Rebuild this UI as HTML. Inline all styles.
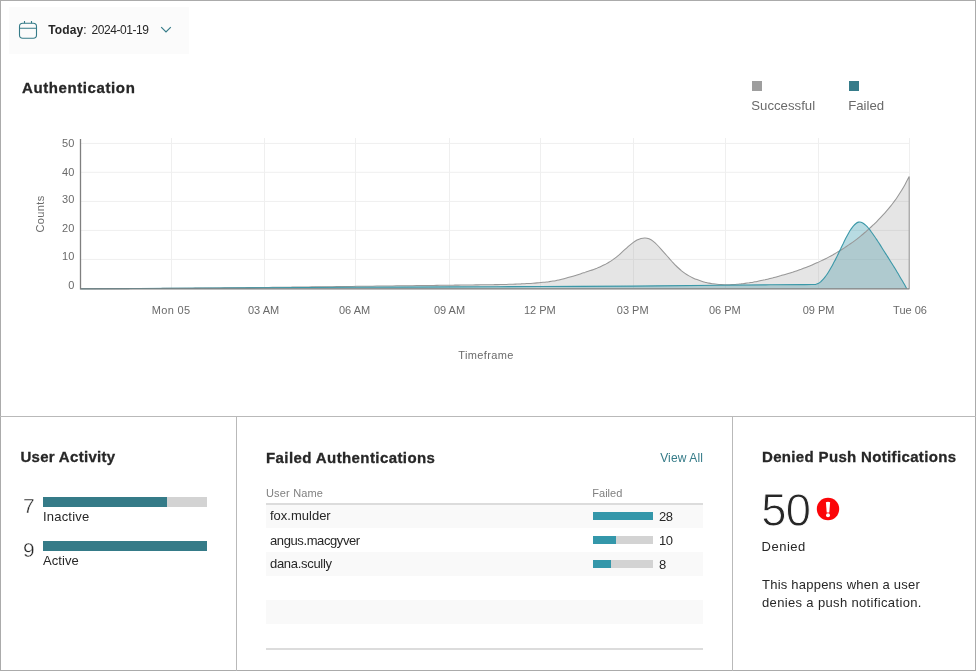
<!DOCTYPE html>
<html lang="en">
<head>
<meta charset="utf-8">
<title>Authentication Dashboard</title>
<style>
html,body{margin:0;padding:0;background:#fff;}
body{width:976px;height:671px;position:relative;overflow:hidden;font-family:"Liberation Sans",Arial,sans-serif;}
.t{position:absolute;line-height:1;white-space:pre;}
.b{position:absolute;}
svg{position:absolute;left:0;top:0;}
#root{position:absolute;left:0;top:0;width:976px;height:671px;will-change:transform;}
</style>
</head>
<body>
<div id="root">
<div class="b" style="left:0px;top:0px;width:976px;height:1px;background:#ababab;"></div>
<div class="b" style="left:0px;top:0px;width:1px;height:671px;background:#ababab;"></div>
<div class="b" style="left:975px;top:0px;width:1px;height:671px;background:#ababab;"></div>
<div class="b" style="left:0px;top:670px;width:976px;height:1px;background:#ababab;"></div>
<div class="b" style="left:0px;top:416px;width:976px;height:1px;background:#b9b9b9;"></div>
<div class="b" style="left:236px;top:416px;width:1px;height:255px;background:#b9b9b9;"></div>
<div class="b" style="left:732px;top:416px;width:1px;height:255px;background:#b9b9b9;"></div>
<div class="b" style="left:9px;top:7px;width:180px;height:47px;background:#fbfbfb;"></div>
<svg width="200" height="60" viewBox="0 0 200 60" fill="none" stroke="#357b88" stroke-width="1.1">
<rect x="19.5" y="23.3" width="17" height="15" rx="3.2" ry="3.2"/>
<path d="M19.5 28.3H36.5M24.5 21V23.3M31.5 21V23.3"/>
<path d="M161.2 27.2L166 32L170.8 27.2" stroke-width="1.2"/>
</svg>
<div class="t" style="left:48.20px;top:23.94px;font-size:12px;color:#272727;letter-spacing:0.12px;"><b>Today</b>:</div>
<div class="t" style="left:91.60px;top:23.94px;font-size:12px;color:#272727;letter-spacing:-0.45px;">2024-01-19</div>
<div class="t" style="left:22.00px;top:80.30px;font-size:15px;color:#272727;font-weight:700;-webkit-text-stroke:0.3px #272727;letter-spacing:0.6px;">Authentication</div>
<div class="b" style="left:752px;top:81px;width:10px;height:10px;background:#9e9e9e;"></div>
<div class="b" style="left:849px;top:81px;width:10px;height:10px;background:#367c8a;"></div>
<div class="t" style="left:751.30px;top:98.83px;font-size:13.2px;color:#6a6a6a;">Successful</div>
<div class="t" style="left:848.20px;top:98.83px;font-size:13.2px;color:#6a6a6a;">Failed</div>
<svg width="976" height="400" viewBox="0 0 976 400" font-family="Liberation Sans, Arial, sans-serif" font-size="11" fill="#6a6a6a">
<g stroke="#efefef" stroke-width="1" fill="none">
<path d="M171.5 138V288"/><path d="M264.5 138V288"/><path d="M355.5 138V288"/><path d="M449.5 138V288"/><path d="M540.5 138V288"/><path d="M633.5 138V288"/><path d="M725.5 138V288"/><path d="M818.5 138V288"/><path d="M909.5 138V288"/><path d="M81 143.4H909.5"/><path d="M81 172.3H909.5"/><path d="M81 201.4H909.5"/><path d="M81 230.4H909.5"/><path d="M81 259.4H909.5"/>
</g>
<g transform="translate(0 0.3)">
<path d="M80.5 288.5C95.7 288.4 140.9 288.2 171.5 288.0C202.1 287.8 233.4 287.7 264 287.5C294.6 287.3 324.2 287.1 355 287.0C385.8 286.9 418.2 286.7 449 286.6C479.8 286.5 509.3 286.3 540 286.2C570.7 286.1 603.0 286.0 633 285.8C663.0 285.6 697.2 285.2 720 285.0C742.8 284.8 755.8 284.6 770 284.5C784.2 284.4 797.8 284.4 805 284.3C812.2 284.2 811.2 284.2 813.0 284.17C814.8 284.1 814.6 284.3 815.5 284.16C816.4 284.0 817.2 283.7 818.1 283.25C819.0 282.8 819.8 282.2 820.6 281.52C821.4 280.8 822.3 280.0 823.1 279.05C823.9 278.1 824.8 277.1 825.6 275.93C826.5 274.8 827.4 273.5 828.2 272.23C829.1 270.9 829.9 269.5 830.7 268.05C831.5 266.6 832.4 265.1 833.2 263.47C834.1 261.9 834.9 260.2 835.8 258.57C836.6 256.9 837.5 255.2 838.3 253.42C839.1 251.7 839.9 249.9 840.8 248.14C841.6 246.4 842.5 244.6 843.4 242.88C844.2 241.2 845.1 239.4 845.9 237.82C846.7 236.2 847.6 234.6 848.4 233.14C849.2 231.7 850.0 230.3 850.9 229.01C851.8 227.8 852.6 226.6 853.5 225.62C854.4 224.6 855.2 223.8 856.0 223.16C856.8 222.5 857.6 222.1 858.5 221.84C859.4 221.6 860.2 221.6 861.1 221.86C862.0 222.1 862.8 222.6 863.6 223.13C864.4 223.7 865.2 224.5 866.1 225.34C867.0 226.2 867.9 227.2 868.7 228.19C869.6 229.2 870.4 230.3 871.2 231.41C872.0 232.5 872.9 233.7 873.7 234.9C874.5 236.1 875.4 237.3 876.2 238.61C877.1 239.9 877.9 241.2 878.8 242.48C879.6 243.8 880.5 245.1 881.3 246.44C882.1 247.8 882.9 249.1 883.8 250.45C884.6 251.8 885.5 253.1 886.4 254.46C887.2 255.8 888.1 257.1 888.9 258.47C889.7 259.8 890.5 261.1 891.4 262.5C892.2 263.9 893.1 265.2 894.0 266.57C894.9 267.9 895.7 269.3 896.5 270.69C897.3 272.1 898.2 273.5 899.0 274.88C899.8 276.3 900.6 277.7 901.5 279.15C902.4 280.6 903.2 282.0 904.1 283.53C905.0 285.1 906.2 287.5 906.6 288.3L906.6 288.5L80.5 288.5Z" fill="#3a9cb0" fill-opacity="0.36" stroke="none"/>
<path d="M80.5 288.5C81.2 288.5 83.2 288.5 84.5 288.48C85.8 288.5 87.2 288.5 88.5 288.47C89.8 288.5 91.2 288.5 92.5 288.46C93.8 288.5 95.2 288.5 96.5 288.45C97.8 288.4 99.2 288.4 100.5 288.43C101.8 288.4 103.2 288.4 104.5 288.42C105.8 288.4 107.2 288.4 108.5 288.4C109.8 288.4 111.2 288.4 112.5 288.38C113.8 288.4 115.2 288.4 116.5 288.37C117.8 288.4 119.2 288.4 120.5 288.35C121.8 288.3 123.2 288.3 124.5 288.33C125.8 288.3 127.2 288.3 128.5 288.31C129.8 288.3 131.2 288.3 132.5 288.28C133.8 288.3 135.2 288.3 136.5 288.26C137.8 288.3 139.2 288.2 140.6 288.24C141.9 288.2 143.3 288.2 144.6 288.21C145.9 288.2 147.3 288.2 148.6 288.19C149.9 288.2 151.3 288.2 152.6 288.16C153.9 288.2 155.3 288.1 156.6 288.13C157.9 288.1 159.3 288.1 160.6 288.11C161.9 288.1 163.3 288.1 164.6 288.08C165.9 288.1 167.3 288.1 168.6 288.05C169.9 288.0 171.3 288.0 172.6 288.02C173.9 288.0 175.3 288.0 176.6 287.99C177.9 288.0 179.3 288.0 180.6 287.96C181.9 287.9 183.3 287.9 184.6 287.92C185.9 287.9 187.3 287.9 188.6 287.89C189.9 287.9 191.3 287.9 192.6 287.86C193.9 287.8 195.3 287.8 196.6 287.82C197.9 287.8 199.3 287.8 200.6 287.79C201.9 287.8 203.3 287.8 204.6 287.75C205.9 287.7 207.3 287.7 208.6 287.71C209.9 287.7 211.3 287.7 212.6 287.68C213.9 287.7 215.3 287.7 216.6 287.64C217.9 287.6 219.3 287.6 220.6 287.6C221.9 287.6 223.3 287.6 224.6 287.56C225.9 287.5 227.3 287.5 228.6 287.52C229.9 287.5 231.3 287.5 232.6 287.48C233.9 287.5 235.3 287.5 236.6 287.44C237.9 287.4 239.3 287.4 240.6 287.4C241.9 287.4 243.3 287.4 244.6 287.36C245.9 287.3 247.3 287.3 248.6 287.32C249.9 287.3 251.3 287.3 252.6 287.27C253.9 287.3 255.3 287.2 256.6 287.23C258.0 287.2 259.4 287.2 260.7 287.19C262.0 287.2 263.4 287.2 264.7 287.14C266.0 287.1 267.4 287.1 268.7 287.1C270.0 287.1 271.4 287.1 272.7 287.05C274.0 287.0 275.4 287.0 276.7 287.01C278.0 287.0 279.4 287.0 280.7 286.96C282.0 286.9 283.4 286.9 284.7 286.92C286.0 286.9 287.4 286.9 288.7 286.87C290.0 286.9 291.4 286.8 292.7 286.83C294.0 286.8 295.4 286.8 296.7 286.78C298.0 286.8 299.4 286.7 300.7 286.73C302.0 286.7 303.4 286.7 304.7 286.68C306.0 286.7 307.4 286.7 308.7 286.64C310.0 286.6 311.4 286.6 312.7 286.59C314.0 286.6 315.4 286.6 316.7 286.54C318.0 286.5 319.4 286.5 320.7 286.49C322.0 286.5 323.4 286.5 324.7 286.44C326.0 286.4 327.4 286.4 328.7 286.39C330.0 286.4 331.4 286.4 332.7 286.35C334.0 286.3 335.4 286.3 336.7 286.3C338.0 286.3 339.4 286.3 340.7 286.25C342.0 286.2 343.4 286.2 344.7 286.2C346.0 286.2 347.4 286.2 348.7 286.15C350.0 286.1 351.4 286.1 352.7 286.1C354.0 286.1 355.4 286.1 356.7 286.05C358.0 286.0 359.4 286.0 360.7 286.0C362.0 286.0 363.4 286.0 364.7 285.95C366.0 285.9 367.4 285.9 368.7 285.9C370.0 285.9 371.3 285.9 372.7 285.85C374.1 285.8 375.4 285.8 376.8 285.8C378.2 285.8 379.5 285.8 380.8 285.75C382.1 285.7 383.5 285.7 384.8 285.7C386.1 285.7 387.5 285.7 388.8 285.65C390.1 285.6 391.5 285.6 392.8 285.6C394.1 285.6 395.5 285.6 396.8 285.55C398.1 285.5 399.5 285.5 400.8 285.5C402.1 285.5 403.5 285.5 404.8 285.45C406.1 285.4 407.5 285.4 408.8 285.4C410.1 285.4 411.5 285.4 412.8 285.35C414.1 285.3 415.5 285.3 416.8 285.3C418.1 285.3 419.5 285.3 420.8 285.25C422.1 285.2 423.5 285.2 424.8 285.2C426.1 285.2 427.5 285.2 428.8 285.15C430.1 285.1 431.5 285.1 432.8 285.11C434.1 285.1 435.5 285.1 436.8 285.06C438.1 285.0 439.5 285.0 440.8 285.01C442.1 285.0 443.5 285.0 444.8 284.96C446.1 284.9 447.5 284.9 448.8 284.91C450.1 284.9 451.5 284.9 452.8 284.87C454.1 284.9 455.5 284.8 456.8 284.82C458.1 284.8 459.5 284.8 460.8 284.77C462.1 284.8 463.5 284.7 464.8 284.72C466.1 284.7 467.5 284.7 468.8 284.68C470.1 284.7 471.5 284.6 472.8 284.63C474.1 284.6 475.5 284.6 476.8 284.59C478.1 284.6 479.5 284.6 480.8 284.54C482.1 284.5 483.5 284.5 484.8 284.49C486.1 284.5 487.5 284.5 488.8 284.44C490.1 284.4 491.5 284.4 492.8 284.38C494.1 284.4 495.5 284.3 496.9 284.31C498.2 284.3 499.6 284.3 500.9 284.23C502.2 284.2 503.6 284.2 504.9 284.14C506.2 284.1 507.6 284.1 508.9 284.03C510.2 284.0 511.6 283.9 512.9 283.9C514.2 283.9 515.6 283.8 516.9 283.75C518.2 283.7 519.6 283.6 520.9 283.57C522.2 283.5 523.6 283.4 524.9 283.37C526.2 283.3 527.6 283.2 528.9 283.14C530.2 283.1 531.6 283.0 532.9 282.88C534.2 282.8 535.6 282.7 536.9 282.58C538.2 282.5 539.6 282.4 540.9 282.25C542.2 282.1 543.6 282.0 544.9 281.86C546.2 281.7 547.6 281.6 548.9 281.39C550.2 281.2 551.6 281.0 552.9 280.78C554.2 280.6 555.6 280.3 556.9 280.03C558.2 279.8 559.6 279.5 560.9 279.15C562.2 278.8 563.6 278.5 564.9 278.15C566.2 277.8 567.6 277.4 568.9 277.06C570.2 276.7 571.6 276.3 572.9 275.89C574.2 275.5 575.6 275.1 576.9 274.65C578.2 274.2 579.6 273.8 580.9 273.38C582.2 273.0 583.6 272.5 584.9 272.08C586.2 271.6 587.6 271.2 588.9 270.76C590.2 270.3 591.6 269.9 592.9 269.38C594.2 268.9 595.6 268.4 596.9 267.87C598.2 267.3 599.6 266.8 600.9 266.17C602.2 265.6 603.6 264.9 604.9 264.23C606.2 263.5 607.6 262.8 608.9 261.97C610.2 261.2 611.5 260.3 612.9 259.34C614.2 258.4 615.6 257.4 617.0 256.27C618.4 255.2 619.7 254.0 621.0 252.78C622.3 251.6 623.7 250.3 625.0 249.11C626.3 247.9 627.7 246.7 629.0 245.52C630.3 244.4 631.7 243.3 633.0 242.32C634.3 241.4 635.7 240.5 637.0 239.76C638.3 239.1 639.7 238.5 641.0 238.13C642.3 237.8 643.7 237.6 645.0 237.64C646.3 237.7 647.7 238.0 649.0 238.52C650.3 239.1 651.7 239.9 653.0 240.9C654.3 241.9 655.7 243.1 657.0 244.45C658.3 245.8 659.7 247.3 661.0 248.73C662.3 250.2 663.7 251.8 665.0 253.31C666.3 254.8 667.7 256.4 669.0 257.91C670.3 259.4 671.7 260.9 673.0 262.35C674.3 263.8 675.7 265.2 677.0 266.45C678.3 267.7 679.7 268.9 681.0 270.04C682.3 271.1 683.7 272.1 685.0 273.04C686.3 274.0 687.7 274.8 689.0 275.54C690.3 276.3 691.7 277.0 693.0 277.6C694.3 278.2 695.7 278.8 697.0 279.31C698.3 279.8 699.7 280.3 701.0 280.74C702.3 281.2 703.7 281.6 705.0 281.9C706.3 282.2 707.7 282.6 709.0 282.82C710.3 283.1 711.7 283.3 713.0 283.51C714.3 283.7 715.7 283.9 717.0 284.0C718.3 284.1 719.7 284.2 721.0 284.29C722.3 284.4 723.7 284.4 725.0 284.42C726.3 284.4 727.6 284.4 729.0 284.39C730.4 284.4 731.8 284.3 733.1 284.23C734.5 284.2 735.8 284.1 737.1 283.95C738.4 283.8 739.8 283.7 741.1 283.57C742.4 283.4 743.8 283.3 745.1 283.09C746.4 282.9 747.8 282.7 749.1 282.52C750.4 282.3 751.8 282.1 753.1 281.86C754.4 281.6 755.8 281.4 757.1 281.12C758.4 280.9 759.8 280.6 761.1 280.31C762.4 280.0 763.8 279.7 765.1 279.43C766.4 279.1 767.8 278.8 769.1 278.49C770.4 278.2 771.8 277.8 773.1 277.49C774.4 277.1 775.8 276.8 777.1 276.43C778.4 276.1 779.8 275.7 781.1 275.32C782.4 274.9 783.8 274.6 785.1 274.17C786.4 273.8 787.8 273.4 789.1 272.96C790.4 272.5 791.8 272.1 793.1 271.68C794.4 271.2 795.8 270.8 797.1 270.34C798.4 269.9 799.8 269.4 801.1 268.93C802.4 268.4 803.8 268.0 805.1 267.44C806.4 266.9 807.8 266.4 809.1 265.86C810.4 265.3 811.8 264.8 813.1 264.2C814.4 263.6 815.8 263.0 817.1 262.44C818.4 261.8 819.8 261.2 821.1 260.59C822.4 260.0 823.8 259.3 825.1 258.63C826.4 258.0 827.8 257.3 829.1 256.56C830.4 255.9 831.8 255.1 833.1 254.38C834.4 253.6 835.8 252.9 837.1 252.08C838.4 251.3 839.8 250.5 841.1 249.65C842.4 248.8 843.8 248.0 845.1 247.08C846.4 246.2 847.8 245.3 849.1 244.37C850.5 243.4 851.9 242.5 853.2 241.52C854.6 240.5 855.9 239.5 857.2 238.5C858.5 237.5 859.9 236.4 861.2 235.31C862.5 234.2 863.9 233.1 865.2 231.95C866.5 230.8 867.9 229.6 869.2 228.41C870.5 227.2 871.9 225.9 873.2 224.67C874.5 223.4 875.9 222.1 877.2 220.74C878.5 219.4 879.9 218.0 881.2 216.59C882.5 215.2 883.9 213.7 885.2 212.23C886.5 210.7 887.9 209.2 889.2 207.56C890.5 205.9 891.9 204.3 893.2 202.5C894.5 200.7 895.9 198.9 897.2 196.93C898.5 195.0 899.9 192.9 901.2 190.77C902.5 188.6 903.9 186.3 905.2 183.9C906.5 181.5 908.5 177.5 909.2 176.23L909.2 288.5L80.5 288.5Z" fill="#969696" fill-opacity="0.25" stroke="none"/>
<path d="M80.5 288.5C81.2 288.5 83.2 288.5 84.5 288.48C85.8 288.5 87.2 288.5 88.5 288.47C89.8 288.5 91.2 288.5 92.5 288.46C93.8 288.5 95.2 288.5 96.5 288.45C97.8 288.4 99.2 288.4 100.5 288.43C101.8 288.4 103.2 288.4 104.5 288.42C105.8 288.4 107.2 288.4 108.5 288.4C109.8 288.4 111.2 288.4 112.5 288.38C113.8 288.4 115.2 288.4 116.5 288.37C117.8 288.4 119.2 288.4 120.5 288.35C121.8 288.3 123.2 288.3 124.5 288.33C125.8 288.3 127.2 288.3 128.5 288.31C129.8 288.3 131.2 288.3 132.5 288.28C133.8 288.3 135.2 288.3 136.5 288.26C137.8 288.3 139.2 288.2 140.6 288.24C141.9 288.2 143.3 288.2 144.6 288.21C145.9 288.2 147.3 288.2 148.6 288.19C149.9 288.2 151.3 288.2 152.6 288.16C153.9 288.2 155.3 288.1 156.6 288.13C157.9 288.1 159.3 288.1 160.6 288.11C161.9 288.1 163.3 288.1 164.6 288.08C165.9 288.1 167.3 288.1 168.6 288.05C169.9 288.0 171.3 288.0 172.6 288.02C173.9 288.0 175.3 288.0 176.6 287.99C177.9 288.0 179.3 288.0 180.6 287.96C181.9 287.9 183.3 287.9 184.6 287.92C185.9 287.9 187.3 287.9 188.6 287.89C189.9 287.9 191.3 287.9 192.6 287.86C193.9 287.8 195.3 287.8 196.6 287.82C197.9 287.8 199.3 287.8 200.6 287.79C201.9 287.8 203.3 287.8 204.6 287.75C205.9 287.7 207.3 287.7 208.6 287.71C209.9 287.7 211.3 287.7 212.6 287.68C213.9 287.7 215.3 287.7 216.6 287.64C217.9 287.6 219.3 287.6 220.6 287.6C221.9 287.6 223.3 287.6 224.6 287.56C225.9 287.5 227.3 287.5 228.6 287.52C229.9 287.5 231.3 287.5 232.6 287.48C233.9 287.5 235.3 287.5 236.6 287.44C237.9 287.4 239.3 287.4 240.6 287.4C241.9 287.4 243.3 287.4 244.6 287.36C245.9 287.3 247.3 287.3 248.6 287.32C249.9 287.3 251.3 287.3 252.6 287.27C253.9 287.3 255.3 287.2 256.6 287.23C258.0 287.2 259.4 287.2 260.7 287.19C262.0 287.2 263.4 287.2 264.7 287.14C266.0 287.1 267.4 287.1 268.7 287.1C270.0 287.1 271.4 287.1 272.7 287.05C274.0 287.0 275.4 287.0 276.7 287.01C278.0 287.0 279.4 287.0 280.7 286.96C282.0 286.9 283.4 286.9 284.7 286.92C286.0 286.9 287.4 286.9 288.7 286.87C290.0 286.9 291.4 286.8 292.7 286.83C294.0 286.8 295.4 286.8 296.7 286.78C298.0 286.8 299.4 286.7 300.7 286.73C302.0 286.7 303.4 286.7 304.7 286.68C306.0 286.7 307.4 286.7 308.7 286.64C310.0 286.6 311.4 286.6 312.7 286.59C314.0 286.6 315.4 286.6 316.7 286.54C318.0 286.5 319.4 286.5 320.7 286.49C322.0 286.5 323.4 286.5 324.7 286.44C326.0 286.4 327.4 286.4 328.7 286.39C330.0 286.4 331.4 286.4 332.7 286.35C334.0 286.3 335.4 286.3 336.7 286.3C338.0 286.3 339.4 286.3 340.7 286.25C342.0 286.2 343.4 286.2 344.7 286.2C346.0 286.2 347.4 286.2 348.7 286.15C350.0 286.1 351.4 286.1 352.7 286.1C354.0 286.1 355.4 286.1 356.7 286.05C358.0 286.0 359.4 286.0 360.7 286.0C362.0 286.0 363.4 286.0 364.7 285.95C366.0 285.9 367.4 285.9 368.7 285.9C370.0 285.9 371.3 285.9 372.7 285.85C374.1 285.8 375.4 285.8 376.8 285.8C378.2 285.8 379.5 285.8 380.8 285.75C382.1 285.7 383.5 285.7 384.8 285.7C386.1 285.7 387.5 285.7 388.8 285.65C390.1 285.6 391.5 285.6 392.8 285.6C394.1 285.6 395.5 285.6 396.8 285.55C398.1 285.5 399.5 285.5 400.8 285.5C402.1 285.5 403.5 285.5 404.8 285.45C406.1 285.4 407.5 285.4 408.8 285.4C410.1 285.4 411.5 285.4 412.8 285.35C414.1 285.3 415.5 285.3 416.8 285.3C418.1 285.3 419.5 285.3 420.8 285.25C422.1 285.2 423.5 285.2 424.8 285.2C426.1 285.2 427.5 285.2 428.8 285.15C430.1 285.1 431.5 285.1 432.8 285.11C434.1 285.1 435.5 285.1 436.8 285.06C438.1 285.0 439.5 285.0 440.8 285.01C442.1 285.0 443.5 285.0 444.8 284.96C446.1 284.9 447.5 284.9 448.8 284.91C450.1 284.9 451.5 284.9 452.8 284.87C454.1 284.9 455.5 284.8 456.8 284.82C458.1 284.8 459.5 284.8 460.8 284.77C462.1 284.8 463.5 284.7 464.8 284.72C466.1 284.7 467.5 284.7 468.8 284.68C470.1 284.7 471.5 284.6 472.8 284.63C474.1 284.6 475.5 284.6 476.8 284.59C478.1 284.6 479.5 284.6 480.8 284.54C482.1 284.5 483.5 284.5 484.8 284.49C486.1 284.5 487.5 284.5 488.8 284.44C490.1 284.4 491.5 284.4 492.8 284.38C494.1 284.4 495.5 284.3 496.9 284.31C498.2 284.3 499.6 284.3 500.9 284.23C502.2 284.2 503.6 284.2 504.9 284.14C506.2 284.1 507.6 284.1 508.9 284.03C510.2 284.0 511.6 283.9 512.9 283.9C514.2 283.9 515.6 283.8 516.9 283.75C518.2 283.7 519.6 283.6 520.9 283.57C522.2 283.5 523.6 283.4 524.9 283.37C526.2 283.3 527.6 283.2 528.9 283.14C530.2 283.1 531.6 283.0 532.9 282.88C534.2 282.8 535.6 282.7 536.9 282.58C538.2 282.5 539.6 282.4 540.9 282.25C542.2 282.1 543.6 282.0 544.9 281.86C546.2 281.7 547.6 281.6 548.9 281.39C550.2 281.2 551.6 281.0 552.9 280.78C554.2 280.6 555.6 280.3 556.9 280.03C558.2 279.8 559.6 279.5 560.9 279.15C562.2 278.8 563.6 278.5 564.9 278.15C566.2 277.8 567.6 277.4 568.9 277.06C570.2 276.7 571.6 276.3 572.9 275.89C574.2 275.5 575.6 275.1 576.9 274.65C578.2 274.2 579.6 273.8 580.9 273.38C582.2 273.0 583.6 272.5 584.9 272.08C586.2 271.6 587.6 271.2 588.9 270.76C590.2 270.3 591.6 269.9 592.9 269.38C594.2 268.9 595.6 268.4 596.9 267.87C598.2 267.3 599.6 266.8 600.9 266.17C602.2 265.6 603.6 264.9 604.9 264.23C606.2 263.5 607.6 262.8 608.9 261.97C610.2 261.2 611.5 260.3 612.9 259.34C614.2 258.4 615.6 257.4 617.0 256.27C618.4 255.2 619.7 254.0 621.0 252.78C622.3 251.6 623.7 250.3 625.0 249.11C626.3 247.9 627.7 246.7 629.0 245.52C630.3 244.4 631.7 243.3 633.0 242.32C634.3 241.4 635.7 240.5 637.0 239.76C638.3 239.1 639.7 238.5 641.0 238.13C642.3 237.8 643.7 237.6 645.0 237.64C646.3 237.7 647.7 238.0 649.0 238.52C650.3 239.1 651.7 239.9 653.0 240.9C654.3 241.9 655.7 243.1 657.0 244.45C658.3 245.8 659.7 247.3 661.0 248.73C662.3 250.2 663.7 251.8 665.0 253.31C666.3 254.8 667.7 256.4 669.0 257.91C670.3 259.4 671.7 260.9 673.0 262.35C674.3 263.8 675.7 265.2 677.0 266.45C678.3 267.7 679.7 268.9 681.0 270.04C682.3 271.1 683.7 272.1 685.0 273.04C686.3 274.0 687.7 274.8 689.0 275.54C690.3 276.3 691.7 277.0 693.0 277.6C694.3 278.2 695.7 278.8 697.0 279.31C698.3 279.8 699.7 280.3 701.0 280.74C702.3 281.2 703.7 281.6 705.0 281.9C706.3 282.2 707.7 282.6 709.0 282.82C710.3 283.1 711.7 283.3 713.0 283.51C714.3 283.7 715.7 283.9 717.0 284.0C718.3 284.1 719.7 284.2 721.0 284.29C722.3 284.4 723.7 284.4 725.0 284.42C726.3 284.4 727.6 284.4 729.0 284.39C730.4 284.4 731.8 284.3 733.1 284.23C734.5 284.2 735.8 284.1 737.1 283.95C738.4 283.8 739.8 283.7 741.1 283.57C742.4 283.4 743.8 283.3 745.1 283.09C746.4 282.9 747.8 282.7 749.1 282.52C750.4 282.3 751.8 282.1 753.1 281.86C754.4 281.6 755.8 281.4 757.1 281.12C758.4 280.9 759.8 280.6 761.1 280.31C762.4 280.0 763.8 279.7 765.1 279.43C766.4 279.1 767.8 278.8 769.1 278.49C770.4 278.2 771.8 277.8 773.1 277.49C774.4 277.1 775.8 276.8 777.1 276.43C778.4 276.1 779.8 275.7 781.1 275.32C782.4 274.9 783.8 274.6 785.1 274.17C786.4 273.8 787.8 273.4 789.1 272.96C790.4 272.5 791.8 272.1 793.1 271.68C794.4 271.2 795.8 270.8 797.1 270.34C798.4 269.9 799.8 269.4 801.1 268.93C802.4 268.4 803.8 268.0 805.1 267.44C806.4 266.9 807.8 266.4 809.1 265.86C810.4 265.3 811.8 264.8 813.1 264.2C814.4 263.6 815.8 263.0 817.1 262.44C818.4 261.8 819.8 261.2 821.1 260.59C822.4 260.0 823.8 259.3 825.1 258.63C826.4 258.0 827.8 257.3 829.1 256.56C830.4 255.9 831.8 255.1 833.1 254.38C834.4 253.6 835.8 252.9 837.1 252.08C838.4 251.3 839.8 250.5 841.1 249.65C842.4 248.8 843.8 248.0 845.1 247.08C846.4 246.2 847.8 245.3 849.1 244.37C850.5 243.4 851.9 242.5 853.2 241.52C854.6 240.5 855.9 239.5 857.2 238.5C858.5 237.5 859.9 236.4 861.2 235.31C862.5 234.2 863.9 233.1 865.2 231.95C866.5 230.8 867.9 229.6 869.2 228.41C870.5 227.2 871.9 225.9 873.2 224.67C874.5 223.4 875.9 222.1 877.2 220.74C878.5 219.4 879.9 218.0 881.2 216.59C882.5 215.2 883.9 213.7 885.2 212.23C886.5 210.7 887.9 209.2 889.2 207.56C890.5 205.9 891.9 204.3 893.2 202.5C894.5 200.7 895.9 198.9 897.2 196.93C898.5 195.0 899.9 192.9 901.2 190.77C902.5 188.6 903.9 186.3 905.2 183.9C906.5 181.5 908.5 177.5 909.2 176.23L909.2 288.5" fill="none" stroke="#989898" stroke-width="1.05"/>
<path d="M80.5 288.5C95.7 288.4 140.9 288.2 171.5 288.0C202.1 287.8 233.4 287.7 264 287.5C294.6 287.3 324.2 287.1 355 287.0C385.8 286.9 418.2 286.7 449 286.6C479.8 286.5 509.3 286.3 540 286.2C570.7 286.1 603.0 286.0 633 285.8C663.0 285.6 697.2 285.2 720 285.0C742.8 284.8 755.8 284.6 770 284.5C784.2 284.4 797.8 284.4 805 284.3C812.2 284.2 811.2 284.2 813.0 284.17C814.8 284.1 814.6 284.3 815.5 284.16C816.4 284.0 817.2 283.7 818.1 283.25C819.0 282.8 819.8 282.2 820.6 281.52C821.4 280.8 822.3 280.0 823.1 279.05C823.9 278.1 824.8 277.1 825.6 275.93C826.5 274.8 827.4 273.5 828.2 272.23C829.1 270.9 829.9 269.5 830.7 268.05C831.5 266.6 832.4 265.1 833.2 263.47C834.1 261.9 834.9 260.2 835.8 258.57C836.6 256.9 837.5 255.2 838.3 253.42C839.1 251.7 839.9 249.9 840.8 248.14C841.6 246.4 842.5 244.6 843.4 242.88C844.2 241.2 845.1 239.4 845.9 237.82C846.7 236.2 847.6 234.6 848.4 233.14C849.2 231.7 850.0 230.3 850.9 229.01C851.8 227.8 852.6 226.6 853.5 225.62C854.4 224.6 855.2 223.8 856.0 223.16C856.8 222.5 857.6 222.1 858.5 221.84C859.4 221.6 860.2 221.6 861.1 221.86C862.0 222.1 862.8 222.6 863.6 223.13C864.4 223.7 865.2 224.5 866.1 225.34C867.0 226.2 867.9 227.2 868.7 228.19C869.6 229.2 870.4 230.3 871.2 231.41C872.0 232.5 872.9 233.7 873.7 234.9C874.5 236.1 875.4 237.3 876.2 238.61C877.1 239.9 877.9 241.2 878.8 242.48C879.6 243.8 880.5 245.1 881.3 246.44C882.1 247.8 882.9 249.1 883.8 250.45C884.6 251.8 885.5 253.1 886.4 254.46C887.2 255.8 888.1 257.1 888.9 258.47C889.7 259.8 890.5 261.1 891.4 262.5C892.2 263.9 893.1 265.2 894.0 266.57C894.9 267.9 895.7 269.3 896.5 270.69C897.3 272.1 898.2 273.5 899.0 274.88C899.8 276.3 900.6 277.7 901.5 279.15C902.4 280.6 903.2 282.0 904.1 283.53C905.0 285.1 906.2 287.5 906.6 288.3" fill="none" stroke="#3b98a8" stroke-width="1.1"/>
</g>
<path d="M80.5 139V288.95H909.5" fill="none" stroke="#7f7f7f" stroke-width="1.3"/>
<text x="74.3" y="147.0" text-anchor="end">50</text><text x="74.3" y="176.0" text-anchor="end">40</text><text x="74.3" y="203.0" text-anchor="end">30</text><text x="74.3" y="232.0" text-anchor="end">20</text><text x="74.3" y="260.0" text-anchor="end">10</text><text x="74.3" y="289.0" text-anchor="end">0</text>
<text x="171.1" y="314.2" text-anchor="middle" letter-spacing="0.3">Mon 05</text><text x="263.6" y="314.2" text-anchor="middle">03 AM</text><text x="354.6" y="314.2" text-anchor="middle">06 AM</text><text x="449.5" y="314.2" text-anchor="middle">09 AM</text><text x="539.8" y="314.2" text-anchor="middle">12 PM</text><text x="632.7" y="314.2" text-anchor="middle">03 PM</text><text x="724.8" y="314.2" text-anchor="middle">06 PM</text><text x="818.6" y="314.2" text-anchor="middle">09 PM</text><text x="910.0" y="314.2" text-anchor="middle">Tue 06</text>
<text x="486" y="358.9" text-anchor="middle" letter-spacing="0.35">Timeframe</text>
<text transform="translate(43.7 214) rotate(-90)" text-anchor="middle" letter-spacing="0.38">Counts</text>
</svg>
<div class="t" style="left:20.40px;top:449.30px;font-size:15px;color:#272727;font-weight:700;-webkit-text-stroke:0.3px #272727;letter-spacing:0.3px;">User Activity</div>
<div class="t" style="left:23.00px;top:495.51px;font-size:20.9px;color:#272727;-webkit-text-stroke:0.35px #fff;">7</div>
<div class="b" style="left:43px;top:497px;width:164px;height:10px;background:#d3d3d3;"></div>
<div class="b" style="left:43px;top:497px;width:124px;height:10px;background:#357b88;"></div>
<div class="t" style="left:43.00px;top:510.20px;font-size:13px;color:#272727;letter-spacing:0.2px;">Inactive</div>
<div class="t" style="left:23.00px;top:540.11px;font-size:20.9px;color:#272727;-webkit-text-stroke:0.35px #fff;">9</div>
<div class="b" style="left:43px;top:541px;width:164px;height:10px;background:#357b88;"></div>
<div class="t" style="left:43.00px;top:553.70px;font-size:13px;color:#272727;letter-spacing:0.08px;">Active</div>
<div class="t" style="left:266.00px;top:450.20px;font-size:15px;color:#272727;font-weight:700;-webkit-text-stroke:0.3px #272727;letter-spacing:0.41px;">Failed Authentications</div>
<div class="t" style="left:660.20px;top:452.34px;font-size:12px;color:#357b88;letter-spacing:0.13px;">View All</div>
<div class="t" style="left:266.00px;top:487.89px;font-size:11px;color:#808080;letter-spacing:0.17px;">User Name</div>
<div class="t" style="left:592.30px;top:487.89px;font-size:11px;color:#808080;">Failed</div>
<div class="b" style="left:266px;top:503px;width:437px;height:2px;background:#dcdcdc;"></div>
<div class="b" style="left:266px;top:505px;width:437px;height:23px;background:#f9f9f9;"></div>
<div class="b" style="left:266px;top:552px;width:437px;height:24px;background:#f9f9f9;"></div>
<div class="b" style="left:266px;top:600px;width:437px;height:24px;background:#f9f9f9;"></div>
<div class="b" style="left:266px;top:648px;width:437px;height:2px;background:#dcdcdc;"></div>
<div class="t" style="left:270.00px;top:508.80px;font-size:13px;color:#272727;">fox.mulder</div>
<div class="b" style="left:593px;top:512px;width:60px;height:8px;background:#d3d3d3;"></div>
<div class="b" style="left:593px;top:512px;width:60px;height:8px;background:#3497aa;"></div>
<div class="t" style="left:659.00px;top:509.80px;font-size:13px;color:#272727;letter-spacing:-0.6px;">28</div>
<div class="t" style="left:270.00px;top:533.70px;font-size:13px;color:#272727;letter-spacing:-0.4px;">angus.macgyver</div>
<div class="b" style="left:593px;top:536px;width:60px;height:8px;background:#d3d3d3;"></div>
<div class="b" style="left:593px;top:536px;width:22.5px;height:8px;background:#3497aa;"></div>
<div class="t" style="left:659.00px;top:533.50px;font-size:13px;color:#272727;letter-spacing:-0.6px;">10</div>
<div class="t" style="left:270.00px;top:557.00px;font-size:13px;color:#272727;letter-spacing:-0.3px;">dana.scully</div>
<div class="b" style="left:593px;top:560px;width:60px;height:8px;background:#d3d3d3;"></div>
<div class="b" style="left:593px;top:560px;width:17.5px;height:8px;background:#3497aa;"></div>
<div class="t" style="left:659.00px;top:558.00px;font-size:13px;color:#272727;letter-spacing:-0.6px;">8</div>
<div class="t" style="left:762.00px;top:449.20px;font-size:15px;color:#272727;font-weight:700;-webkit-text-stroke:0.3px #272727;letter-spacing:0.34px;">Denied Push Notifications</div>
<div class="t" style="left:761.20px;top:487.57px;font-size:45.4px;color:#272727;letter-spacing:-0.6px;-webkit-text-stroke:0.9px #fff;">50</div>
<svg width="976" height="671" viewBox="0 0 976 671" style="pointer-events:none">
<circle cx="828" cy="509" r="11.2" fill="#fb0508"/>
<path d="M825.9 502.2Q828 501.2 830.1 502.2L829.3 512.4H826.7Z" fill="#fff"/>
<circle cx="828" cy="515.3" r="2" fill="#fff"/>
</svg>
<div class="t" style="left:761.60px;top:540.20px;font-size:13px;color:#272727;letter-spacing:0.5px;">Denied</div>
<div class="t" style="left:762.00px;top:577.60px;font-size:13px;color:#272727;letter-spacing:0.23px;">This happens when a user</div>
<div class="t" style="left:762.00px;top:595.90px;font-size:13px;color:#272727;letter-spacing:0.35px;">denies a push notification.</div>
</div>
</body>
</html>
